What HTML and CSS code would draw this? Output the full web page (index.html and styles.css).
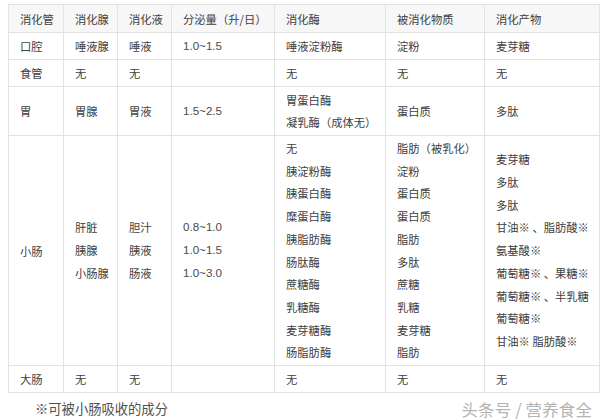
FILE: index.html
```html
<!DOCTYPE html>
<html lang="zh">
<head>
<meta charset="utf-8">
<link rel="stylesheet" href="styles.css">
</head>
<body>
<table class="digest">
  <colgroup>
    <col class="c1"><col class="c2"><col class="c3"><col class="c4"><col class="c5"><col class="c6"><col class="c7">
  </colgroup>
  <tr class="r-head">
    <td>消化管</td><td>消化腺</td><td>消化液</td><td>分泌量（升/日）</td><td>消化酶</td><td>被消化物质</td><td>消化产物</td>
  </tr>
  <tr class="r-one">
    <td>口腔</td><td>唾液腺</td><td>唾液</td><td class="num">1.0~1.5</td><td>唾液淀粉酶</td><td>淀粉</td><td>麦芽糖</td>
  </tr>
  <tr class="r-one">
    <td>食管</td><td>无</td><td>无</td><td></td><td>无</td><td>无</td><td>无</td>
  </tr>
  <tr class="r-stomach">
    <td>胃</td><td>胃腺</td><td>胃液</td><td class="num">1.5~2.5</td>
    <td><div class="lines l22"><div>胃蛋白酶</div><div>凝乳酶（成体无）</div></div></td>
    <td>蛋白质</td><td>多肽</td>
  </tr>
  <tr class="r-small">
    <td>小肠</td>
    <td><div class="lines"><div>肝脏</div><div>胰腺</div><div>小肠腺</div></div></td>
    <td><div class="lines"><div>胆汁</div><div>胰液</div><div>肠液</div></div></td>
    <td class="num"><div class="lines"><div>0.8~1.0</div><div>1.0~1.5</div><div>1.0~3.0</div></div></td>
    <td><div class="lines"><div>无</div><div>胰淀粉酶</div><div>胰蛋白酶</div><div>糜蛋白酶</div><div>胰脂肪酶</div><div>肠肽酶</div><div>蔗糖酶</div><div>乳糖酶</div><div>麦芽糖酶</div><div>肠脂肪酶</div></div></td>
    <td><div class="lines"><div>脂肪（被乳化）</div><div>淀粉</div><div>蛋白质</div><div>蛋白质</div><div>脂肪</div><div>多肽</div><div>蔗糖</div><div>乳糖</div><div>麦芽糖</div><div>脂肪</div></div></td>
    <td><div class="lines"><div>麦芽糖</div><div>多肽</div><div>多肽</div><div>甘油※ 、脂肪酸※</div><div>氨基酸※</div><div>葡萄糖※ 、果糖※</div><div>葡萄糖※ 、半乳糖</div><div>葡萄糖※</div><div>甘油※ 脂肪酸※</div></div></td>
  </tr>
  <tr class="r-one">
    <td>大肠</td><td>无</td><td>无</td><td></td><td>无</td><td>无</td><td>无</td>
  </tr>
</table>
<div class="foot">
  <span class="note">※可被小肠吸收的成分</span>
  <span class="mark">头条号 / 营养食全</span>
</div>
</body>
</html>
```

FILE: styles.css
```css
html, body {
  margin: 0;
  padding: 0;
  background: #ffffff;
}
body {
  width: 600px;
  height: 420px;
  overflow: hidden;
  font-family: "Noto Sans CJK SC", "Noto Sans", sans-serif;
  color: #404040;
}
.digest {
  margin: 4px 0 0 8px;
  border-collapse: collapse;
  table-layout: fixed;
  width: 591px;
  font-size: 11.3px;
}
.c1 { width: 55px; }
.c2 { width: 54px; }
.c3 { width: 54px; }
.c4 { width: 103px; }
.c5 { width: 111px; }
.c6 { width: 99px; }
.c7 { width: 115px; }
.digest td {
  border: 1px solid #e2e2e2;
  padding: 0 0 0 11px;
  vertical-align: middle;
  line-height: 16px;
  white-space: nowrap;
}
.digest .num {
  font-family: "Liberation Sans", Arial, sans-serif;
  font-size: 11.6px;
  color: #4a4a4a;
}
.r-head td {
  background: #f7f7f7;
  height: 27px;
}
.r-one td { height: 26px; }
.r-stomach td { height: 48px; }
.r-small td { height: 229px; }
.lines > div {
  height: 22.7px;
  line-height: 22.7px;
}
.lines.l22 > div {
  height: 22px;
  line-height: 22px;
}
.foot {
  display: flex;
  justify-content: space-between;
  align-items: center;
  height: 18px;
  padding: 7px 8px 0 35px;
}
.note {
  font-size: 13.3px;
  line-height: 18px;
  color: #505050;
}
.mark {
  font-size: 16.4px;
  line-height: 18px;
  color: #b4b4b4;
  letter-spacing: 0.2px;
}
```
